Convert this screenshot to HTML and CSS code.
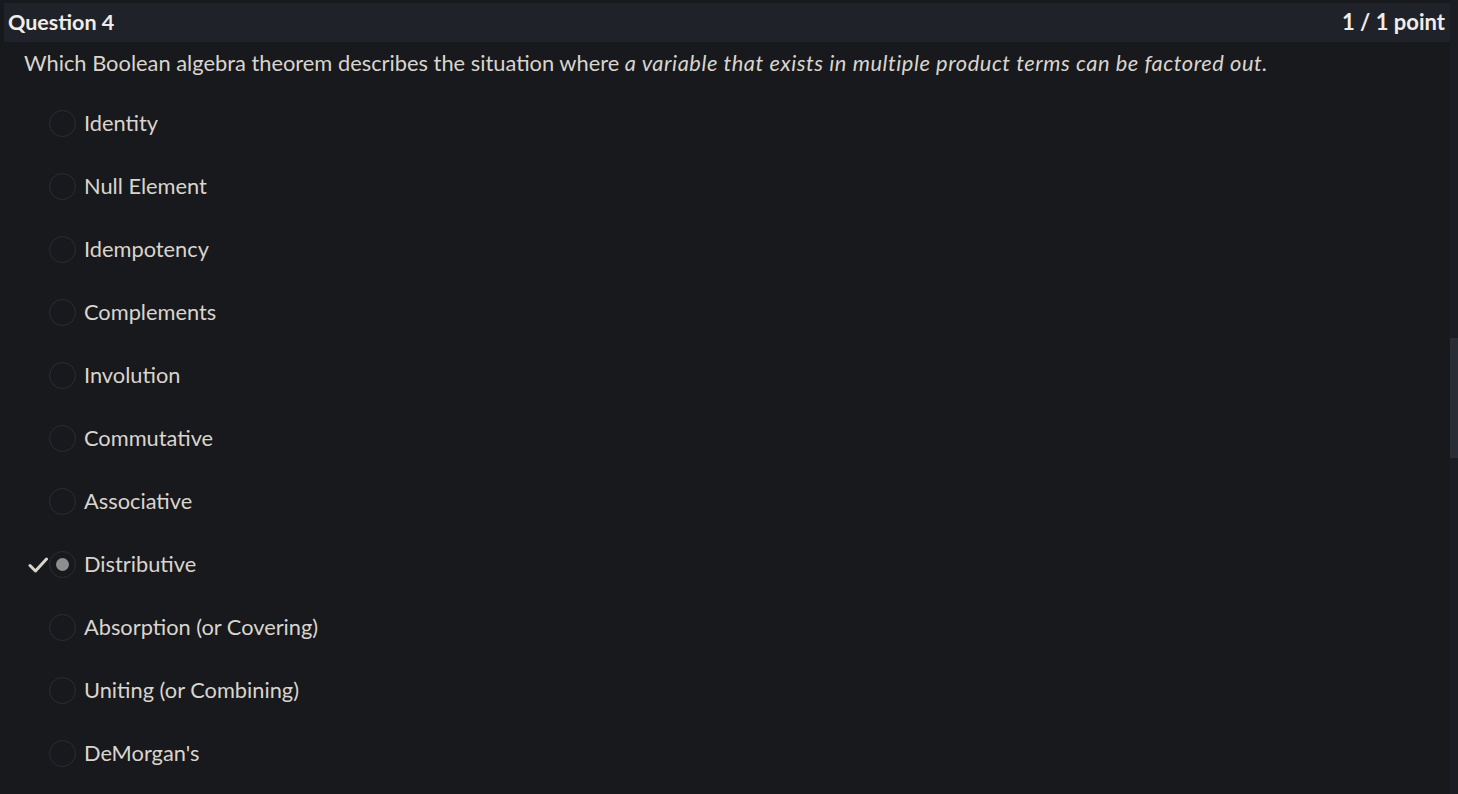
FILE: index.html
```html
<!DOCTYPE html>
<html lang="en">
<head>
<meta charset="utf-8">
<title>Question 4</title>
<link rel="stylesheet" href="styles.css">
</head>
<body>
<div class="page">
  <main class="content">
    <header class="qhead">
      <h2 class="qtitle">Question 4</h2>
      <span class="qpoints">1 / 1 point</span>
    </header>
    <p class="qtext">Which Boolean algebra theorem describes the situation where <em>a variable that exists in multiple product terms can be factored out.</em></p>
    <ul class="options">
      <li class="option"><span class="mark"></span><span class="radio"></span><span class="label">Identity</span></li>
      <li class="option"><span class="mark"></span><span class="radio"></span><span class="label">Null Element</span></li>
      <li class="option"><span class="mark"></span><span class="radio"></span><span class="label">Idempotency</span></li>
      <li class="option"><span class="mark"></span><span class="radio"></span><span class="label">Complements</span></li>
      <li class="option"><span class="mark"></span><span class="radio"></span><span class="label">Involution</span></li>
      <li class="option"><span class="mark"></span><span class="radio"></span><span class="label">Commutative</span></li>
      <li class="option"><span class="mark"></span><span class="radio"></span><span class="label">Associative</span></li>
      <li class="option selected"><span class="mark"><svg viewBox="0 0 20 16" width="20" height="16"><path d="M2 8.5 L7.5 14 L18.5 2" fill="none" stroke="#d8d4cc" stroke-width="3" stroke-linecap="round" stroke-linejoin="round"/></svg></span><span class="radio"><span class="dot"></span></span><span class="label">Distributive</span></li>
      <li class="option"><span class="mark"></span><span class="radio"></span><span class="label">Absorption (or Covering)</span></li>
      <li class="option"><span class="mark"></span><span class="radio"></span><span class="label">Uniting (or Combining)</span></li>
      <li class="option"><span class="mark"></span><span class="radio"></span><span class="label">DeMorgan's</span></li>
    </ul>
  </main>
  <div class="scrolltrack"><div class="scrollthumb"></div></div>
</div>
</body>
</html>
```
FILE: styles.css
```css
* { box-sizing: border-box; }
html, body { margin: 0; padding: 0; }
body {
  background: #18191d;
  color: #d9d5cd;
  font-family: Lato, "Open Sans", "Liberation Sans", sans-serif;
  height: 794px;
  overflow: hidden;
}
.page {
  display: flex;
  height: 794px;
}
.content {
  flex: 1;
  padding: 3px 0 0 4px;
}
.qhead {
  display: flex;
  justify-content: space-between;
  align-items: center;
  height: 39px;
  background: #202229;
  padding: 0 5px 2px 4px;
}
.qtitle {
  margin: 0;
  font-size: 21.5px;
  font-weight: 700;
  color: #f0ede8;
}
.qpoints {
  font-size: 22px;
  font-weight: 700;
  color: #f0ede8;
}
.qtext {
  margin: 0;
  padding: 7px 0 0 20px;
  font-size: 21.85px;
  line-height: 28px;
}
.qtext em {
  font-style: italic;
  letter-spacing: 0.55px;
}
.options {
  list-style: none;
  margin: 0;
  padding: 15px 0 0 19px;
}
.option {
  display: flex;
  align-items: center;
  height: 63px;
}
.mark {
  width: 26px;
  height: 16px;
  display: flex;
  align-items: center;
  justify-content: flex-end;
  padding-right: 1px;
}
.radio {
  width: 27px;
  height: 27px;
  border: 1.5px solid #2b2d34;
  border-radius: 50%;
  display: flex;
  align-items: center;
  justify-content: center;
  margin-right: 8px;
}
.dot {
  width: 13px;
  height: 13px;
  border-radius: 50%;
  background: #8e8e8e;
}
.label {
  font-size: 21.8px;
  padding-bottom: 2px;
}
.scrolltrack {
  width: 8px;
  background: #1c1d22;
  padding-top: 338px;
}
.scrollthumb {
  height: 120px;
  background: #2a2d35;
}
```
